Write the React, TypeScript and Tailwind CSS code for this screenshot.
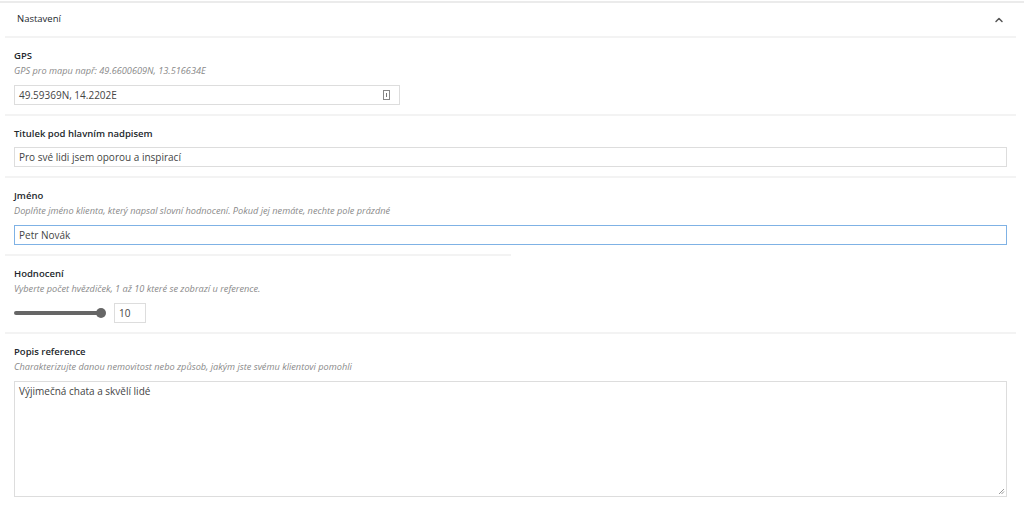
import { ChevronUp } from 'lucide-react';

function FieldRow({ label, desc, children, narrowBorder }: { label: string; desc?: string; children: React.ReactNode; narrowBorder?: boolean }) {
  return (
    <div className="relative px-[9px] pt-[11px] pb-[11px]">
      <div className="text-[9.5px] font-semibold text-[#23282d] leading-[14px]">{label}</div>
      {desc && <div className="text-[9.2px] italic text-[#8a8a8a] leading-[14px] mt-[1px]">{desc}</div>}
      <div className={desc ? 'mt-[7px]' : 'mt-[6px]'}>{children}</div>
      <div className={`absolute bottom-0 left-0 h-[2px] bg-[#f3f3f3] ${narrowBorder ? 'w-[506px]' : 'right-0'}`} />
    </div>
  );
}

export default function App() {
  return (
    <div className="w-[1024px] h-[510px] bg-white font-['Open_Sans',sans-serif] text-[#444] overflow-hidden">
      <div className="h-[2px] mt-[1px] bg-[#ebebeb]" />
      <div className="mx-[5px] w-[1011px]">
        <div className="relative flex items-center justify-between h-[35px] pb-[2px] px-[12px]">
          <span className="text-[9.5px] text-[#23282d]">Nastavení</span>
          <ChevronUp size={12} strokeWidth={3} className="text-[#555] mr-[-1px]" />
          <div className="absolute bottom-0 left-0 right-0 h-[2px] bg-[#f3f3f3]" />
        </div>

        <FieldRow label="GPS" desc="GPS pro mapu např: 49.6600609N, 13.516634E">
          <div className="flex items-center justify-between w-[386px] h-[20px] border border-[#ddd] px-[4px]">
            <span className="text-[10px] leading-[14px]">49.59369N, 14.2202E</span>
            <span className="w-[7px] h-[10px] border border-[#888] flex items-center justify-center mr-[5px]">
              <span className="w-[1px] h-[4px] bg-[#777]" />
            </span>
          </div>
        </FieldRow>

        <FieldRow label="Titulek pod hlavním nadpisem">
          <div className="flex items-center w-[993px] h-[20px] border border-[#ddd] px-[4px]">
            <span className="text-[10px] leading-[14px]">Pro své lidi jsem oporou a inspirací</span>
          </div>
        </FieldRow>

        <FieldRow label="Jméno" desc="Doplňte jméno klienta, který napsal slovní hodnocení. Pokud jej nemáte, nechte pole prázdné" narrowBorder>
          <div className="flex items-center w-[993px] h-[20px] border border-[#7fb2e5] px-[4px]">
            <span className="text-[10px] leading-[14px]">Petr Novák</span>
          </div>
        </FieldRow>

        <FieldRow label="Hodnocení" desc="Vyberte počet hvězdiček, 1 až 10 které se zobrazí u reference.">
          <div className="flex items-center">
            <div className="relative w-[88px] h-[4px] rounded-full bg-[#666]">
              <div className="absolute right-[-4px] top-[-3px] w-[10px] h-[10px] rounded-full bg-[#666]" />
            </div>
            <div className="flex items-center w-[32px] h-[20px] border border-[#ddd] px-[4px] ml-[12px]">
              <span className="text-[10px] leading-[14px]">10</span>
            </div>
          </div>
        </FieldRow>

        <div className="px-[9px] pt-[11px]">
          <div className="text-[9.5px] font-semibold text-[#23282d] leading-[14px]">Popis reference</div>
          <div className="text-[9.2px] italic text-[#8a8a8a] leading-[14px] mt-[1px]">Charakterizujte danou nemovitost nebo způsob, jakým jste svému klientovi pomohli</div>
          <div className="relative mt-[7px] w-[993px] h-[116px] border border-[#ddd] px-[4px] py-[2px]">
            <div className="text-[10px] leading-[14px]">Výjimečná chata a skvělí lidé</div>
            <svg className="absolute right-[1px] bottom-[1px]" width="7" height="7" viewBox="0 0 7 7">
              <path d="M1 6L6 1M3.5 6L6 3.5" stroke="#999" strokeWidth="1" />
            </svg>
          </div>
        </div>
      </div>
    </div>
  );
}
